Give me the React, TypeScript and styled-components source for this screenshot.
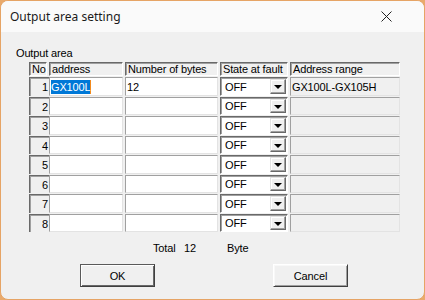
import { createGlobalStyle } from "styled-components";
import styled from "styled-components";

const GlobalStyle = createGlobalStyle`
  html, body {
    margin: 0;
    padding: 0;
    width: 425px;
    height: 300px;
    background: #e9aa6c;
    overflow: hidden;
  }
`;

const Window = styled.div`
  box-sizing: border-box;
  width: 425px;
  height: 300px;
  border: 1px solid #e6a465;
  border-radius: 8px;
  background: #f0f0f0;
  overflow: hidden;
  display: flex;
  flex-direction: column;
  font-family: "Liberation Sans", Arial, sans-serif;
  font-size: 11px;
  letter-spacing: -0.15px;
  color: #000;
`;

const TitleBar = styled.div`
  height: 30px;
  flex-shrink: 0;
  background: #fafafa;
  display: flex;
  align-items: center;
  justify-content: space-between;
  padding: 0 32px 1px 9px;
  font-family: "Noto Sans", "Open Sans", sans-serif;
  font-size: 12px;
  letter-spacing: 0;
  color: #1a1a1a;
`;

const Body = styled.div`
  padding: 15px 0 0 15px;
  display: flex;
  flex-direction: column;
`;

const Label = styled.div`
  height: 12px;
  line-height: 12px;
`;

const Grid = styled.div`
  margin: 3px 0 0 13px;
  display: grid;
  grid-template-columns: 18px 74px 93px 68px 110px;
  grid-template-rows: 14px repeat(4, 19px 18px);
  column-gap: 2px;
  row-gap: 1px;
`;

const HeadCell = styled.div`
  box-sizing: border-box;
  border-top: 1px solid #696969;
  border-left: 1px solid #696969;
  border-right: 1px solid #fff;
  border-bottom: 1px solid #fff;
  box-shadow: inset 1px 1px 0 #a0a0a0;
  padding-left: 2px;
  line-height: 12px;
  white-space: nowrap;
  overflow: hidden;
`;

const NumCell = styled.div`
  box-sizing: border-box;
  border-top: 1px solid #696969;
  border-left: 1px solid #696969;
  box-shadow: inset 1px 1px 0 #a0a0a0;
  display: flex;
  align-items: center;
  justify-content: flex-end;
  padding-right: 1px;
  margin-right: -2px;
`;

const Field = styled.div<{ $grey?: boolean }>`
  box-sizing: border-box;
  background: ${(p) => (p.$grey ? "#f0f0f0" : "#fff")};
  border-top: 1px solid #a0a0a0;
  border-left: 1px solid #a0a0a0;
  border-right: 1px solid #e3e3e3;
  border-bottom: 1px solid #e3e3e3;
  display: flex;
  align-items: center;
  padding-left: 1px;
  white-space: nowrap;
  overflow: hidden;
`;

const Selected = styled.span`
  background: #0078d7;
  color: #fff;
  line-height: 14px;
  border-right: 1px solid #f28a1e;
`;

const Combo = styled.div`
  box-sizing: border-box;
  background: #fff;
  border-top: 1px solid #696969;
  border-left: 1px solid #696969;
  border-right: 1px solid #fff;
  border-bottom: 1px solid #fff;
  box-shadow: inset 1px 1px 0 #a0a0a0;
  display: flex;
  align-items: center;
  justify-content: space-between;
  padding: 1px 1px 1px 4px;
`;

const DropButton = styled.div`
  box-sizing: border-box;
  width: 16px;
  height: 100%;
  background: #f0f0f0;
  border-top: 1px solid #e3e3e3;
  border-left: 1px solid #e3e3e3;
  border-right: 1px solid #696969;
  border-bottom: 1px solid #696969;
  box-shadow: inset -1px -1px 0 #a0a0a0, inset 1px 1px 0 #fff;
  display: flex;
  align-items: center;
  justify-content: center;
`;

const Arrow = styled.div`
  width: 0;
  height: 0;
  border-left: 4px solid transparent;
  border-right: 4px solid transparent;
  border-top: 4px solid #000;
  margin-top: 1px;
`;

const TotalRow = styled.div`
  display: flex;
  height: 12px;
  line-height: 12px;
  margin-top: 10px;
  padding-left: 137px;
`;

const TotalText = styled.span<{ $w: number }>`
  display: inline-block;
  width: ${(p) => p.$w}px;
`;

const ButtonRow = styled.div`
  display: flex;
  gap: 118px;
  padding-left: 64px;
  margin-top: 10px;
`;

const Button = styled.div<{ $default?: boolean }>`
  box-sizing: border-box;
  width: 75px;
  height: 23px;
  background: #f0f0f0;
  display: flex;
  align-items: center;
  justify-content: center;
  padding-top: 1px;
  border: 1px solid ${(p) => (p.$default ? "#5a5a5a" : "#f0f0f0")};
  border-top-color: ${(p) => (p.$default ? "#5a5a5a" : "#ffffff")};
  border-left-color: ${(p) => (p.$default ? "#5a5a5a" : "#ffffff")};
  border-right-color: #404040;
  border-bottom-color: #404040;
  box-shadow: ${(p) =>
    p.$default
      ? "inset 1px 1px 0 #fff, inset -1px -1px 0 #696969"
      : "inset 1px 1px 0 #f8f8f8, inset -1px -1px 0 #a0a0a0"};
`;

const rows = [1, 2, 3, 4, 5, 6, 7, 8];

export default function App() {
  return (
    <>
      <GlobalStyle />
      <Window>
        <TitleBar>
          <span>Output area setting</span>
          <svg width="11" height="11" viewBox="0 0 11 11">
            <path d="M0.5 0.5 L10.5 10.5 M10.5 0.5 L0.5 10.5" stroke="#222" strokeWidth="1" />
          </svg>
        </TitleBar>
        <Body>
          <Label>Output area</Label>
          <Grid>
            <HeadCell>No</HeadCell>
            <HeadCell>address</HeadCell>
            <HeadCell>Number of bytes</HeadCell>
            <HeadCell>State at fault</HeadCell>
            <HeadCell>Address range</HeadCell>
            {rows.map((n) => (
              <>
                <NumCell key={`n${n}`}>{n}</NumCell>
                <Field key={`a${n}`}>
                  {n === 1 ? <Selected>GX100L</Selected> : null}
                </Field>
                <Field key={`b${n}`}>{n === 1 ? "12" : ""}</Field>
                <Combo key={`c${n}`}>
                  <span>OFF</span>
                  <DropButton>
                    <Arrow />
                  </DropButton>
                </Combo>
                <Field key={`r${n}`} $grey>
                  {n === 1 ? "GX100L-GX105H" : ""}
                </Field>
              </>
            ))}
          </Grid>
          <TotalRow>
            <TotalText $w={31}>Total</TotalText>
            <TotalText $w={43}>12</TotalText>
            <span>Byte</span>
          </TotalRow>
          <ButtonRow>
            <Button $default>OK</Button>
            <Button>Cancel</Button>
          </ButtonRow>
        </Body>
      </Window>
    </>
  );
}
